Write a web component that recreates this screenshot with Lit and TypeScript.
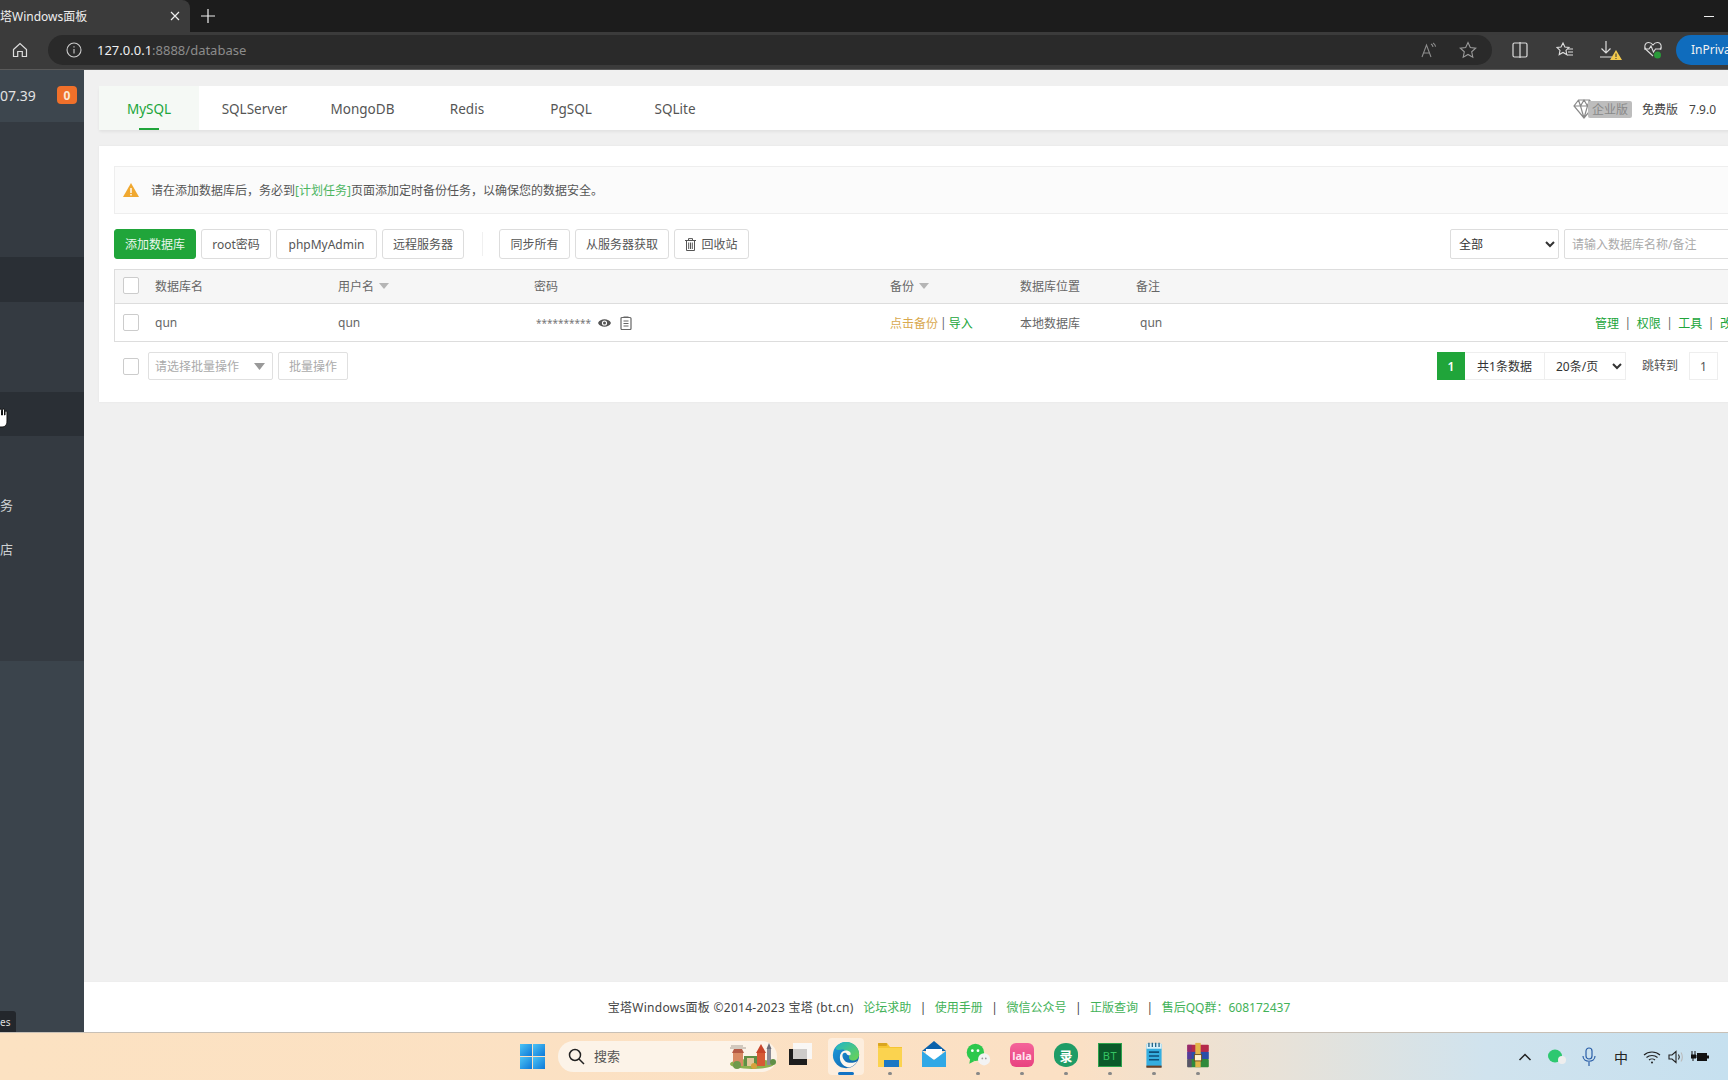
import { LitElement, html, css, svg } from "lit";
import { customElement } from "lit/decorators.js";

const taskIcons = [
  { name: "edge", dot: "active", icon: svg`<svg viewBox="0 0 32 32" width="28" height="28"><defs><linearGradient id="e1" x1="0" y1="0" x2="1" y2="1"><stop offset="0" stop-color="#1f9fe0"/><stop offset="1" stop-color="#0b5aa6"/></linearGradient><linearGradient id="e2" x1="0" y1="0" x2="1" y2="1"><stop offset="0" stop-color="#1fb6c8"/><stop offset="1" stop-color="#6fd44e"/></linearGradient></defs><circle cx="16" cy="16" r="15" fill="url(#e1)"/><path d="M4 8C8 2 13 1 16 1c9 0 15 7 15 14 0 6-5 8-9 7-3-1-3-4-2-6-1-4-6-7-10-6-3 0-5 1-6-2z" fill="url(#e2)"/><path d="M9 19c0-6 4-9 9-8 3 .6 4 3 3 5-2 1-3 0-4-1-1-2-3-2-4-1-2 2-1 6 2 9 3 2 8 3 14 0-2 3-5 6-9 7-6 0-11-5-11-11z" fill="#fdf7ee"/></svg>` },
  { name: "folder", dot: "dot", icon: svg`<svg viewBox="0 0 26 30" width="26" height="30"><path d="M1 3h9l3 4h12v20H1z" fill="#f6c531"/><rect x="1" y="8" width="24" height="19" fill="#fbd34f"/><rect x="7" y="20" width="15" height="7" fill="#1b77c4"/><rect x="1" y="3" width="9" height="3" rx="1" fill="#d9a520"/></svg>` },
  { name: "mail", dot: "", icon: svg`<svg viewBox="0 0 26 30" width="26" height="30"><path d="M13 1 25 11H1z" fill="#0b62ab"/><rect x="5" y="9" width="16" height="10" fill="#fff"/><path d="M1 11l12 9 12-9v16H1z" fill="#30a8e6"/></svg>` },
  { name: "wechat", dot: "dot", icon: svg`<svg viewBox="0 0 30 30" width="26" height="28"><ellipse cx="12" cy="12" rx="10" ry="10" fill="#2dc84d"/><path d="M6 19l-1 6 6-3z" fill="#2dc84d"/><circle cx="8.500" cy="10" r="1.600" fill="#fff"/><circle cx="15" cy="10" r="1.600" fill="#fff"/><ellipse cx="22" cy="20" rx="7" ry="7" fill="#f3f3f3"/><circle cx="20" cy="19" r="1" fill="#999"/><circle cx="24" cy="19" r="1" fill="#999"/></svg>` },
  { name: "pink", dot: "dot", label: "lala", cls: "pink" },
  { name: "green", dot: "dot", label: "录", cls: "green" },
  { name: "bt", dot: "dot", label: "BT", cls: "bt" },
  { name: "note", dot: "dot", icon: svg`<svg viewBox="0 0 22 32" width="20" height="27"><rect x="2" y="2" width="18" height="28" rx="1" fill="#35aee0"/><rect x="2" y="2" width="18" height="6" fill="#d9f0f8"/><rect x="2" y="28" width="18" height="2.500" fill="#6e3f22"/><path d="M5 1v5M9 1v5M13 1v5M17 1v5" stroke="#1c5f86" stroke-width="1.500"/><path d="M5 12h12M5 16.500h12M5 21h12" stroke="#0f4f78" stroke-width="1.800"/></svg>` },
  { name: "rar", dot: "dot", icon: svg`<svg viewBox="0 0 26 30" width="26" height="27"><rect x="1" y="3" width="24" height="8" rx="1" fill="#b52a4a"/><rect x="1" y="11" width="24" height="8" fill="#2a4fa8"/><rect x="1" y="19" width="24" height="9" rx="1" fill="#2f8a3c"/><rect x="1" y="3" width="5" height="25" fill="#7b2a8a" opacity=".55"/><rect x="10" y="1" width="6" height="27" fill="#e3b64a"/><rect x="9" y="14" width="8" height="7" fill="#fff2d0" stroke="#6b4a1a"/></svg>` },
];

const dbTabs = [
  ["MySQL", "on"], ["SQLServer", ""], ["MongoDB", ""], ["Redis", ""], ["PgSQL", ""], ["SQLite", ""],
];

const caret = html`<svg class="sort" viewBox="0 0 10 6" width="10" height="6"><path d="M0 0h10L5 6z" fill="#b5b5b5"/></svg>`;

@customElement("app-root")
export class AppRoot extends LitElement {
  static styles = css`
    :host { display: block; width: 1728px; height: 1080px; overflow: hidden; font-family: "Noto Sans", "Noto Sans CJK SC", sans-serif; font-size: 12px; color: #555; background: #f0f0f0; }
    * { box-sizing: border-box; }
    svg { display: block; flex: none; }
    .page { display: flex; flex-direction: column; width: 1728px; height: 1080px; }

    .tabstrip { height: 32px; background: #1c1c1c; display: flex; align-items: center; flex: none; }
    .tab { width: 190px; height: 32px; background: #3b3b3b; border-top-right-radius: 8px; display: flex; align-items: center; justify-content: space-between; padding-right: 9px; color: #eee; font-size: 12px; }
    .plus { margin-left: 11px; }
    .winmin { margin-left: auto; margin-right: 14px; width: 10px; height: 1px; background: #eee; }

    .toolbar { height: 38px; background: #3b3b3b; border-bottom: 1px solid #5a5a5a; display: flex; align-items: center; flex: none; padding-bottom: 2px; overflow: hidden; }
    .home { margin-left: 12px; margin-right: 20px; }
    .addr { width: 1444px; height: 30px; border-radius: 15px; background: #2a2a2a; display: flex; align-items: center; padding-left: 18px; color: #8c8c8c; font-size: 13px; flex: none; }
    .addr b { font-weight: 400; color: #f0f0f0; }
    .addr .info { margin-right: 15px; }
    .addr .ra { margin-left: auto; margin-right: 22px; }
    .addr .st { margin-right: 15px; }
    .tools { display: flex; align-items: center; margin-left: 20px; gap: 24px; flex: none; }
    .inpriv { margin-left: 13px; width: 70px; height: 30px; border-radius: 15px 0 0 15px; background: #0f6cbd; color: #f2f2f2; font-size: 12px; display: flex; align-items: center; padding-left: 15px; overflow: hidden; white-space: nowrap; flex: none; }

    .body { flex: 1; min-height: 0; display: flex; overflow: hidden; }
    .side { width: 84px; flex: none; background: #3b444c; color: #d8d8d8; display: flex; flex-direction: column; position: relative; }
    .side-top { height: 52px; flex: none; background: #3d464e; display: flex; align-items: center; justify-content: space-between; padding: 0 7px 2px 0; font-size: 14px; color: #e2e2e2; }
    .badge { width: 20px; height: 18px; border-radius: 4px; background: #f0702a; color: #fbe9d4; font-size: 12px; font-weight: 700; display: flex; align-items: center; justify-content: center; }
    .side-list { height: 539px; flex: none; background: #343a41; display: flex; flex-direction: column; }
    .si { height: 44.500px; flex: none; display: flex; align-items: center; font-size: 13px; color: #cfd2d4; }
    .si.sel { background: #2a2f35; }
    .gap1 { height: 135px; }
    .gap2 { height: 90px; }
    .gap3 { height: 46px; }
    .tip { position: absolute; left: 0; bottom: 0; width: 16px; height: 21px; background: #23272c; color: #ddd; font-size: 10px; border-radius: 0 3px 0 0; display: flex; align-items: center; }
    .hand { position: absolute; left: -2px; top: 338px; }

    .main { flex: none; width: 1730px; display: flex; flex-direction: column; }
    .content { flex: 1; min-height: 0; padding: 16px 15px 0; display: flex; flex-direction: column; gap: 16px; }

    .dbtabs { height: 44px; flex: none; background: #fff; box-shadow: 0 2px 3px rgba(0,0,0,.06); display: flex; align-items: center; border-radius: 2px; }
    .dbt { height: 44px; width: 104px; display: flex; align-items: center; justify-content: center; font-size: 13.500px; color: #555; position: relative; flex: none; padding-top: 2px; }
    .dbt:nth-child(1) { width: 100px; background: #f5f9f5; color: #20a53a; }
    .dbt:nth-child(2) { width: 111px; }
    .dbt:nth-child(3) { width: 105px; }
    .dbt.on::after { content: ""; position: absolute; left: 40px; width: 20px; bottom: 0; height: 2px; background: #20a53a; }
    .ver { margin-left: 846px; margin-top: 2px; display: flex; align-items: center; font-size: 12px; color: #444; }
    .pro { margin-left: -7px; width: 44px; height: 17px; background: #bdbdbd; color: #888; border-radius: 2px; display: flex; align-items: center; justify-content: center; }
    .free { margin-left: 10px; }
    .num { margin-left: 11px; }

    .card { height: 256px; flex: none; background: #fff; padding: 20px 15px 0; box-shadow: 0 0 2px rgba(0,0,0,.06); display: flex; flex-direction: column; }
    .alert { height: 48px; flex: none; background: #fbfbfb; border: 1px solid #eee; display: flex; align-items: center; padding-left: 8px; color: #555; }
    .alert svg { margin-right: 12px; }
    .alert a, .act a { color: #20a53a; text-decoration: none; }
    .alert a { opacity: .8; }

    .bar { height: 30px; flex: none; margin-top: 15px; display: flex; align-items: center; gap: 5px; }
    .btn { height: 30px; flex: none; border: 1px solid #ddd; border-radius: 3px; background: #fff; color: #555; display: flex; align-items: center; justify-content: center; font-size: 12px; gap: 5px; }
    .btn.pri { background: #20a53a; color: #eaf7ec; border-color: #20a53a; width: 82px; }
    .w1 { width: 70px; } .w2 { width: 101px; } .w3 { width: 82px; } .w4 { width: 71px; } .w5 { width: 94px; } .w6 { width: 75px; }
    .sep { width: 1px; height: 24px; background: #f0f0f0; margin: 0 11px 0 13px; flex: none; }
    .filter { margin-left: auto; display: flex; gap: 5px; margin-right: 0; }
    select { font-family: inherit; font-size: 12px; color: #333; background: #fff; border: 1px solid #ddd; border-radius: 2px; padding: 0 4px; height: 30px; outline: none; }
    .fsel { width: 109px; }
    .fin { width: 220px; height: 30px; border: 1px solid #ddd; border-radius: 2px; padding: 0 7px; font: inherit; font-size: 12px; outline: none; flex: none; }
    .fin::placeholder { color: #aaa; }

    .table { margin-top: 10px; border: 1px solid #ddd; flex: none; }
    .row { display: grid; grid-template-columns: 40px 183px 196px 356px 130px 116px 459px 1fr; align-items: center; }
    .row.head { height: 34px; background: #f6f6f6; border-bottom: 1px solid #ddd; color: #666; padding-bottom: 2px; }
    .row.data { height: 37px; color: #666; }
    .cell { display: flex; align-items: center; gap: 5px; white-space: nowrap; }
    .cell.backup { gap: 2px; }
    .cell.backup a { color: #20a53a; }
    .cell.remark { padding-left: 4px; }
    .cb { width: 16px; height: 17px; border: 1px solid #ccc; border-radius: 2px; background: #fff; margin-left: 8px; flex: none; }
    .stars { font-size: 10px; color: #777; margin: 0 2px 0 2px; }
    .warn { color: #d9a94f; }
    .act { gap: 5.500px; color: #666; }
    .mini { margin-left: 4px; }

    .foot { display: flex; align-items: center; height: 28px; flex: none; margin-top: 10px; }
    .fcb { margin-left: 9px; margin-right: 9px; }
    .bsel { width: 125px; height: 28px; border: 1px solid #e0e0e0; border-radius: 2px; color: #aaa; display: flex; align-items: center; justify-content: space-between; padding: 0 7px 0 6px; flex: none; }
    .bbtn { margin-left: 5px; width: 70px; height: 28px; border: 1px solid #e0e0e0; border-radius: 2px; color: #aaa; display: flex; align-items: center; justify-content: center; flex: none; }
    .pager { margin-left: auto; margin-right: 66px; display: flex; align-items: center; }
    .pg { width: 28px; height: 28px; background: #20a53a; color: #fff; font-weight: 600; display: flex; align-items: center; justify-content: center; }
    .total { height: 28px; width: 80px; border: 1px solid #eee; border-width: 1px 1px 1px 0; color: #333; display: flex; align-items: center; justify-content: center; }
    .psel { width: 81px; height: 28px; border: 1px solid #eee; border-left: none; border-radius: 0; padding-left: 7px; }
    .jump { margin-left: 16px; color: #555; margin-top: -2px; }
    .pin { margin-left: 11px; width: 29px; height: 28px; border: 1px solid #eee; color: #555; display: flex; align-items: center; justify-content: center; }

    .footer { height: 51px; flex: none; background: #fff; display: flex; align-items: center; justify-content: center; color: #444; gap: 8.500px; border-top: 1px solid #eee; white-space: nowrap; }
    .footer .copy { letter-spacing: .28px; margin-right: 1px; }
    .footer a { color: #20a53a; text-decoration: none; opacity: .85; }

    .taskbar { height: 48px; flex: none; border-top: 1px solid #c8c0b6; background: linear-gradient(90deg, #fce2c2 0%, #fbe0c4 62%, #e8e2d8 74%, #d0e3ee 86%, #c6e0ef 100%); display: flex; align-items: center; padding-left: 520px; position: relative; }
    .start { display: grid; grid-template-columns: 12px 12px; gap: 1px; margin-right: 13px; flex: none; }
    .start i { width: 12px; height: 12px; background: linear-gradient(135deg, #4cc4f5, #0d78d8); display: block; }
    .pill { width: 219px; height: 31px; border-radius: 16px; background: #fcf3e8; display: flex; align-items: center; padding: 0 0 2px 10px; color: #555; font-size: 13px; flex: none; margin-top: -1px; }
    .pill .q { margin-right: 9px; margin-top: 2px; }
    .pill .castle { margin-left: auto; margin-right: 1px; margin-top: 2px; }
    .tv { width: 44px; position: relative; height: 47px; flex: none; display: flex; align-items: center; justify-content: center; padding-bottom: 3px; }
    .apps { display: flex; align-items: center; margin-left: 3px; }
    .app { width: 44px; height: 47px; position: relative; display: flex; align-items: center; justify-content: center; padding-bottom: 3px; flex: none; }
    .app.active::before { content: ""; position: absolute; left: 4px; right: 4px; top: 5px; bottom: 5px; background: rgba(255,255,255,.45); border-radius: 4px; }
    .app svg { position: relative; }
    .app.dot::after { content: ""; position: absolute; bottom: 5px; left: 20px; width: 4px; height: 3px; border-radius: 2px; background: #888; }
    .app.active::after { content: ""; position: absolute; bottom: 5px; left: 14px; width: 16px; height: 3px; border-radius: 2px; background: #1273c4; }
    .chip { width: 24px; height: 24px; display: flex; align-items: center; justify-content: center; position: relative; }
    .chip.pink { border-radius: 6px; background: linear-gradient(180deg, #f4649a, #e8417f); color: #ffe3ee; font-size: 11px; font-weight: 700; }
    .chip.green { border-radius: 50%/45%; background: #1f9c66; color: #fff; font-size: 13px; font-weight: 700; }
    .chip.bt { background: #0a5a2a; border: 1px solid #2ca24c; color: #36c463; font-size: 11px; letter-spacing: .5px; }
    .tray { position: absolute; right: 0; top: 0; height: 47px; display: flex; align-items: center; }
    .tray > * { flex: none; }
    .zh { font-size: 14px; color: #222; margin-right: 15px; }
    .t1 { margin-right: 16px; } .t2 { margin-right: 16px; } .t3 { margin-right: 18px; } .t4 { margin-right: 7px; } .t5 { margin-right: 7px; } .t6 { margin-right: 19px; }
    .fav { margin-left: 4px; }
    .heart { margin-left: -3px; }
  `;

  render() {
    return html`<div class="page">
      <div class="tabstrip">
        <div class="tab"><span>塔Windows面板</span>
          <svg width="12" height="12" viewBox="0 0 12 12"><path d="M2 2l8 8M10 2l-8 8" stroke="#eee" stroke-width="1.200"/></svg>
        </div>
        <svg class="plus" width="14" height="14" viewBox="0 0 14 14"><path d="M7 0v14M0 7h14" stroke="#eee" stroke-width="1.200"/></svg>
        <div class="winmin"></div>
      </div>
      <div class="toolbar">
        <svg class="home" width="16" height="16" viewBox="0 0 16 16" fill="none" stroke="#ddd" stroke-width="1.200"><path d="M1.500 7.500 8 1.500l6.500 6v7h-4.200v-5H5.700v5H1.500z"/></svg>
        <div class="addr">
          <svg class="info" width="16" height="16" viewBox="0 0 16 16" fill="none" stroke="#ccc" stroke-width="1.100"><circle cx="8" cy="8" r="7"/><path d="M8 7v4.500M8 4.200v1.200"/></svg>
          <b>127.0.0.1</b>:8888/database
          <svg class="ra" width="16" height="16" viewBox="0 0 16 16" fill="none" stroke="#8d8d8d" stroke-width="1.100"><path d="M1 15 5.500 3 10 15M2.600 11h6"/><path d="M10 2c1.200.6 1.800 1.500 2 3M12 1c1.500.8 2.300 2 2.600 3.600"/></svg>
          <svg class="st" width="18" height="18" viewBox="0 0 18 18" fill="none" stroke="#9a9a9a" stroke-width="1.100"><path d="M9 1.500l2.300 5 5.400.6-4 3.700 1.100 5.400L9 13.500l-4.800 2.700 1.100-5.400-4-3.700 5.400-.6z"/></svg>
        </div>
        <div class="tools">
          <svg width="16" height="16" viewBox="0 0 16 16" fill="none" stroke="#ddd" stroke-width="1.200"><path d="M8 1H2.500A1.500 1.500 0 0 0 1 2.500v11A1.500 1.500 0 0 0 2.500 15H8zM8 1h5.500A1.500 1.500 0 0 1 15 2.500v11a1.500 1.500 0 0 1-1.500 1.500H8M8 0v16"/></svg>
          <svg class="fav" width="18" height="18" viewBox="0 0 18 18" fill="none" stroke="#ddd" stroke-width="1.100"><path d="M7 2l1.900 4 4.100.5-3 2.900.8 4.200L7 11.500l-3.800 2.100.8-4.200-3-2.900L5 6z"/><path d="M12 8h5M12 11h5M11 14h6"/></svg>
          <svg width="24" height="22" viewBox="0 0 24 22" fill="none" stroke="#ddd" stroke-width="1.200"><path d="M8 2v12M3.500 9.500 8 14l4.500-4.500M2 18h12"/><path d="M18 11l6 10H12z" fill="#f2c94c" stroke="none"/><path d="M18 14.500v3.500M18 19v1" stroke="#333" stroke-width="1"/></svg>
          <svg class="heart" width="20" height="20" viewBox="0 0 20 20" fill="none" stroke="#ddd" stroke-width="1.100"><path d="M10 16 3 9.500C.5 7 2 2.500 5.500 2.500c2 0 3.500 1 4.500 2.500 1-1.500 2.500-2.500 4.500-2.500C18 2.500 19.500 7 17 9.500"/><path d="M1 9h5l2-3 2.500 6 2-3h6"/><circle cx="14.500" cy="15" r="3.500" fill="#2a9a3a" stroke="none"/></svg>
        </div>
        <div class="inpriv">InPrivate</div>
      </div>
      <div class="body">
        <div class="side">
          <div class="side-top"><span>07.39</span><span class="badge">0</span></div>
          <div class="side-list">
            <div class="si gap1"></div>
            <div class="si sel"></div>
            <div class="si gap2"></div>
            <div class="si sel"></div>
            <div class="si gap3"></div>
            <div class="si">务</div>
            <div class="si">店</div>
          </div>
          <svg class="hand" width="10" height="20" viewBox="0 0 10 20"><path d="M2 1c1 0 1.500 1 1.500 2v4h1V2c0-1.500 2-1.500 2 0v5h.5V4c0-1.300 2-1.300 2 0v9c0 4-2 6-5 6H0V1z" fill="#fff" stroke="#111" stroke-width="1"/></svg>
          <div class="tip">es</div>
        </div>
        <div class="main">
          <div class="content">
            <div class="dbtabs">
              ${dbTabs.map(([n, c]) => html`<div class="dbt ${c}">${n}</div>`)}
              <div class="ver">
                <svg width="22" height="20" viewBox="0 0 22 20" fill="none" stroke="#8a8a8a" stroke-width="1.200"><path d="M5.500 1h11L21 7 11 19 1 7zM1 7h20M7.500 7 11 19l3.500-12M5.500 1 7.500 7 11 1l3.500 6 2-6"/></svg>
                <div class="pro">企业版</div>
                <span class="free">免费版</span><span class="num">7.9.0</span>
              </div>
            </div>
            <div class="card">
              <div class="alert">
                <svg width="16" height="14" viewBox="0 0 16 14"><path d="M8 0l8 14H0z" fill="#f0a830"/><path d="M8 5v5M8 11v1.500" stroke="#fff" stroke-width="1.400"/></svg>
                <span>请在添加数据库后，务必到<a>[计划任务]</a>页面添加定时备份任务，以确保您的数据安全。</span>
              </div>
              <div class="bar">
                <div class="btn pri">添加数据库</div>
                <div class="btn w1">root密码</div>
                <div class="btn w2">phpMyAdmin</div>
                <div class="btn w3">远程服务器</div>
                <div class="sep"></div>
                <div class="btn w4">同步所有</div>
                <div class="btn w5">从服务器获取</div>
                <div class="btn w6">
                  <svg width="11" height="13" viewBox="0 0 11 13" fill="none" stroke="#555" stroke-width="1"><path d="M0 2.500h11M3.500 2.500V.6h4v1.900M1.500 2.500V12.500h8V2.500M3.700 4.500v6.500M5.500 4.500v6.500M7.300 4.500v6.500"/></svg>
                  回收站
                </div>
                <div class="filter">
                  <select class="fsel"><option>全部</option></select>
                  <input class="fin" placeholder="请输入数据库名称/备注" />
                </div>
              </div>
              <div class="table">
                <div class="row head">
                  <div class="cell"><span class="cb"></span></div>
                  <div class="cell">数据库名</div>
                  <div class="cell">用户名 ${caret}</div>
                  <div class="cell">密码</div>
                  <div class="cell">备份 ${caret}</div>
                  <div class="cell">数据库位置</div>
                  <div class="cell">备注</div>
                  <div class="cell"></div>
                </div>
                <div class="row data">
                  <div class="cell"><span class="cb"></span></div>
                  <div class="cell">qun</div>
                  <div class="cell">qun</div>
                  <div class="cell">
                    <span class="stars">**********</span>
                    <svg width="13" height="10" viewBox="0 0 13 10"><path d="M0 5c2-5 11-5 13 0-2 5-11 5-13 0z" fill="#555"/><circle cx="6.500" cy="5" r="2.600" fill="#fff"/><circle cx="6.500" cy="5" r="1.500" fill="#555"/></svg>
                    <svg class="mini" width="12" height="14" viewBox="0 0 12 14" fill="none" stroke="#666" stroke-width="1.200"><rect x="1" y="1.500" width="10" height="12" rx="1"/><path d="M3.500 1h5M3.500 5h5M3.500 7.500h5M3.500 10h5"/></svg>
                  </div>
                  <div class="cell backup"><span class="warn">点击备份</span> | <a>导入</a></div>
                  <div class="cell">本地数据库</div>
                  <div class="cell remark">qun</div>
                  <div class="cell act"><a>管理</a> | <a>权限</a> | <a>工具</a> | <a>改密</a></div>
                </div>
              </div>
              <div class="foot">
                <span class="cb fcb"></span>
                <div class="bsel">请选择批量操作 <svg width="11" height="7" viewBox="0 0 11 7"><path d="M0 0h11L5.500 7z" fill="#999"/></svg></div>
                <div class="bbtn">批量操作</div>
                <div class="pager">
                  <div class="pg">1</div>
                  <div class="total">共1条数据</div>
                  <select class="psel"><option>20条/页</option></select>
                  <span class="jump">跳转到</span>
                  <div class="pin">1</div>
                </div>
              </div>
            </div>
          </div>
          <div class="footer">
            <span class="copy">宝塔Windows面板 ©2014-2023 宝塔 (bt.cn)</span>
            <a>论坛求助</a><span>|</span><a>使用手册</a><span>|</span><a>微信公众号</a><span>|</span><a>正版查询</a><span>|</span><a>售后QQ群：608172437</a>
          </div>
        </div>
      </div>
      <div class="taskbar">
        <div class="start"><i></i><i></i><i></i><i></i></div>
        <div class="pill">
          <svg class="q" width="17" height="17" viewBox="0 0 17 17" fill="none" stroke="#222" stroke-width="1.500"><circle cx="7" cy="7" r="5.500"/><path d="M11 11l5 5"/></svg>
          搜索
          <svg class="castle" width="48" height="26" viewBox="0 0 48 26">
            <ellipse cx="24" cy="21" rx="22" ry="5" fill="#8db04e"/>
            <path d="M2 5h16M3 3h12" stroke="#a89f94" stroke-width="1"/>
            <rect x="5" y="10" width="10" height="13" fill="#d98a63"/><path d="M4 10l2-4h8l2 4z" fill="#b55a44"/>
            <rect x="16" y="13" width="13" height="10" fill="#5f8f46"/><rect x="19" y="15" width="7" height="8" fill="#e3c79a"/>
            <rect x="29" y="9" width="8" height="14" fill="#d65a35"/><path d="M28 10l5-9 5 9z" fill="#c8452a"/>
            <rect x="39" y="6" width="4" height="16" fill="#8c8c96"/><path d="M38.500 6 41 0l2.500 6z" fill="#6d6d78"/>
            <circle cx="45" cy="19" r="3" fill="#5f8f46"/><circle cx="9" cy="22" r="4" fill="#6f9a4c"/><circle cx="26" cy="23" r="3" fill="#d6a13c"/>
          </svg>
        </div>
        <div class="tv">
          <svg width="26" height="24" viewBox="0 0 26 24"><rect x="7" y="0" width="19" height="16" fill="#f9f7f5"/><rect x="3" y="6" width="18" height="16" fill="#1d1d1d"/><rect x="7" y="6" width="14" height="10" fill="#cdcbc9"/></svg>
        </div>
        <div class="apps">
          ${taskIcons.map((t) => html`<div class="app ${t.dot}">${t.icon ?? html`<div class="chip ${t.cls}">${t.label}</div>`}</div>`)}
        </div>
        <div class="tray">
          <svg class="t1" width="14" height="8" viewBox="0 0 14 8" fill="none" stroke="#222" stroke-width="1.500"><path d="M1.500 7 7 1.500 12.500 7"/></svg>
          <svg class="t2" width="18" height="16" viewBox="0 0 18 16"><ellipse cx="7" cy="7" rx="7" ry="6.500" fill="#2dc870"/><circle cx="14" cy="11" r="4" fill="#eee"/></svg>
          <svg class="t3" width="14" height="20" viewBox="0 0 14 20" fill="none" stroke="#2b5fa8" stroke-width="1.200"><rect x="4" y="1" width="6" height="11" rx="3"/><path d="M1 9c0 7 12 7 12 0M7 15v4"/></svg>
          <span class="zh">中</span>
          <svg class="t4" width="18" height="14" viewBox="0 0 18 14" fill="none" stroke="#222" stroke-width="1.100"><path d="M1 5c4.500-4 11.500-4 16 0M3.500 7.500c3-2.700 8-2.700 11 0M6 10c1.600-1.400 4.400-1.400 6 0"/><circle cx="9" cy="12.500" r="1" fill="#222" stroke="none"/></svg>
          <svg class="t5" width="16" height="14" viewBox="0 0 16 14" fill="none" stroke="#222" stroke-width="1.100"><path d="M1 5h3l4-3.500v11L4 9H1zM10.500 4.500c1 1.500 1 3.500 0 5"/><path d="M13 2.500c1.800 2.500 1.800 6.500 0 9" stroke="#bbb"/></svg>
          <svg class="t6" width="18" height="14" viewBox="0 0 18 14"><path d="M1 1v4M4 1v4M0 5h5v3H0zM2 8v3" stroke="#111" fill="#111" stroke-width="1"/><rect x="6" y="3" width="10" height="8" fill="#111"/><rect x="16" y="5.500" width="2" height="3" fill="#111"/></svg>
        </div>
      </div>
    </div>`;
  }
}
